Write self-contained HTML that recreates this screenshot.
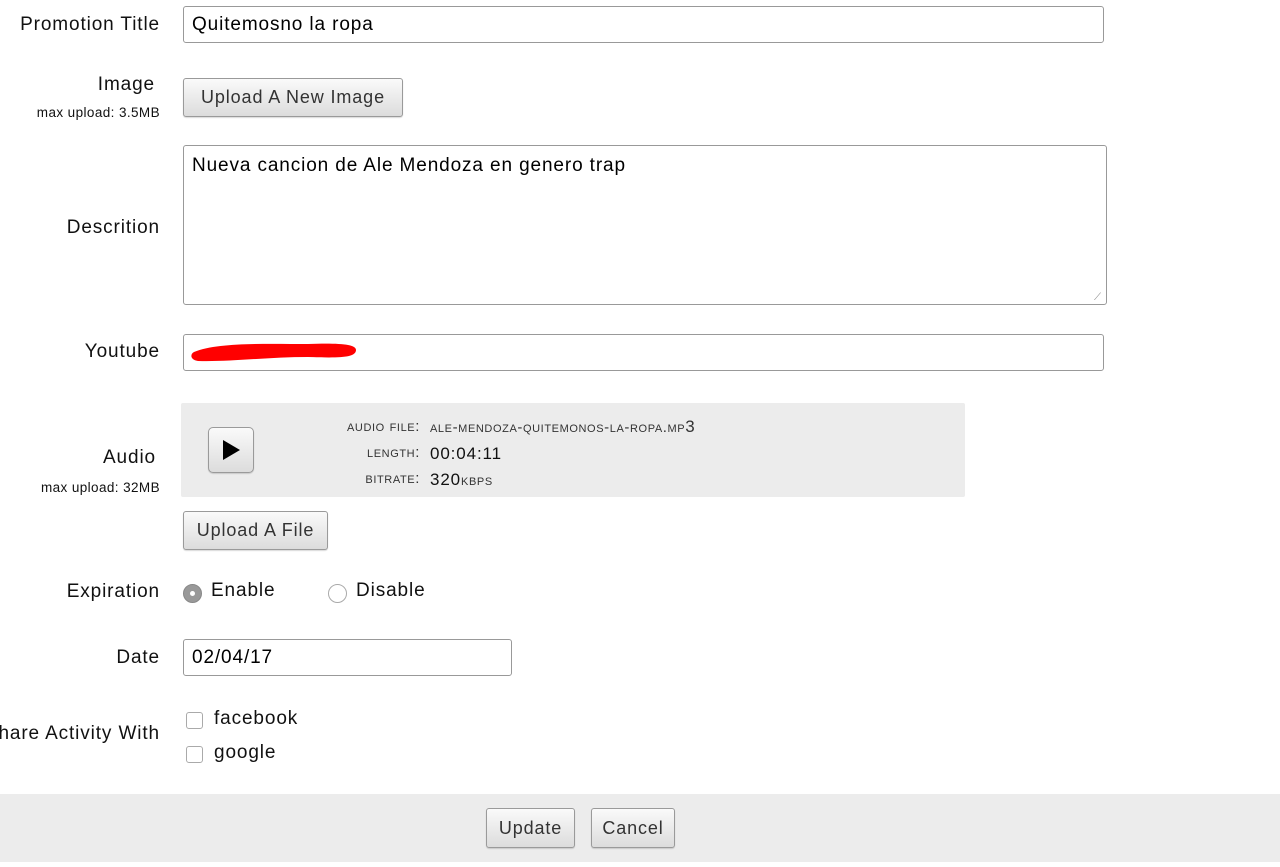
<!DOCTYPE html>
<html><head><meta charset="utf-8"><style>
*{box-sizing:border-box;margin:0;padding:0}
body{width:1280px;height:867px;background:#fff;font-family:"Liberation Sans",Arial,sans-serif;color:#111;position:relative;overflow:hidden;letter-spacing:0.055em}
.a{position:absolute}
.lbl{position:absolute;right:1120px;font-size:19px;white-space:nowrap;text-align:right}
.sub{position:absolute;right:1120px;font-size:13.5px;white-space:nowrap;letter-spacing:0.03em}
.inp{position:absolute;border:1px solid #999;border-radius:3px;background:#fff;font-size:19px;padding-left:8px;color:#000}
.btn{position:absolute;border:1px solid #9a9a9a;border-radius:3px;background:linear-gradient(#fafafa,#dcdcdc);font-size:18px;color:#333;text-align:center;box-shadow:0 1px 1px rgba(0,0,0,.15)}
.sc{font-variant:small-caps;text-transform:lowercase;font-size:15px;color:#333;letter-spacing:0.04em}
.radio{position:absolute;width:19px;height:19px;border-radius:50%;border:1px solid #aaa;background:#fff}
.cb{position:absolute;width:17px;height:17px;border:1px solid #aaa;border-radius:3px;background:#fff}
</style></head><body>
<div class="lbl" style="top:14px">Promotion Title</div>
<div class="inp" style="left:183px;top:6px;width:921px;height:37px;line-height:35px">Quitemosno la ropa</div>

<div class="lbl" style="top:74px;right:1125px">Image</div>
<div class="sub" style="top:105px">max upload: 3.5MB</div>
<div class="btn" style="left:183px;top:78px;width:220px;height:39px;line-height:37px">Upload A New Image</div>

<div class="lbl" style="top:217px">Descrition</div>
<div class="inp" style="left:183px;top:145px;width:924px;height:160px;padding-top:9px;line-height:22px">Nueva cancion de Ale Mendoza en genero trap</div>
<div class="a" style="left:1094px;top:292px;font-size:10px;color:#888">⟋</div>

<div class="lbl" style="top:341px">Youtube</div>
<div class="inp" style="left:183px;top:334px;width:921px;height:37px"></div>
<svg class="a" style="left:188px;top:338px" width="175" height="28"><path d="M6 14 C30 4,80 6,120 6 C150 5,168 6,168 12 C168 20,150 20,120 19 C80 19,40 24,10 23 C2 22,2 16,6 14Z" fill="#f00"/></svg>

<div class="lbl" style="top:447px;right:1124px">Audio</div>
<div class="sub" style="top:480px">max upload: 32MB</div>
<div class="a" style="left:181px;top:403px;width:784px;height:94px;background:#ececec;border-radius:2px"></div>
<div class="btn" style="left:208px;top:427px;width:46px;height:46px;border-radius:5px"></div>
<div class="a" style="left:223px;top:440px;width:0;height:0;border-left:17px solid #000;border-top:10px solid transparent;border-bottom:10px solid transparent"></div>
<div class="a" style="left:300px;top:414px;width:120px;text-align:right;line-height:26px" >
<div class="sc">Audio File:</div><div class="sc">Length:</div><div class="sc">Bitrate:</div></div>
<div class="a" style="left:430px;top:414px;line-height:26px;font-size:17px">
<div class="sc">Ale-Mendoza-Quitemonos-la-ropa.mp<span style="font-size:17px">3</span></div><div>00:04:11</div><div>320<span class="sc">kbps</span></div></div>
<div class="btn" style="left:183px;top:511px;width:145px;height:39px;line-height:37px">Upload A File</div>

<div class="lbl" style="top:581px">Expiration</div>
<div class="radio" style="left:183px;top:584px;background:#999;border-color:#888"></div>
<div class="a" style="left:190px;top:591px;width:5px;height:5px;border-radius:50%;background:#fff"></div>
<div class="a" style="left:211px;top:580px;font-size:19px">Enable</div>
<div class="radio" style="left:328px;top:584px"></div>
<div class="a" style="left:356px;top:580px;font-size:19px">Disable</div>

<div class="lbl" style="top:647px">Date</div>
<div class="inp" style="left:183px;top:639px;width:329px;height:37px;line-height:35px">02/04/17</div>

<div class="lbl" style="top:723px">hare Activity With</div>
<div class="cb" style="left:186px;top:712px"></div>
<div class="a" style="left:214px;top:708px;font-size:19px">facebook</div>
<div class="cb" style="left:186px;top:746px"></div>
<div class="a" style="left:214px;top:742px;font-size:19px">google</div>

<div class="a" style="left:0;top:794px;width:1280px;height:68px;background:#ececec"></div>
<div class="btn" style="left:486px;top:808px;width:89px;height:40px;line-height:38px">Update</div>
<div class="btn" style="left:591px;top:808px;width:84px;height:40px;line-height:38px">Cancel</div>
</body></html>
